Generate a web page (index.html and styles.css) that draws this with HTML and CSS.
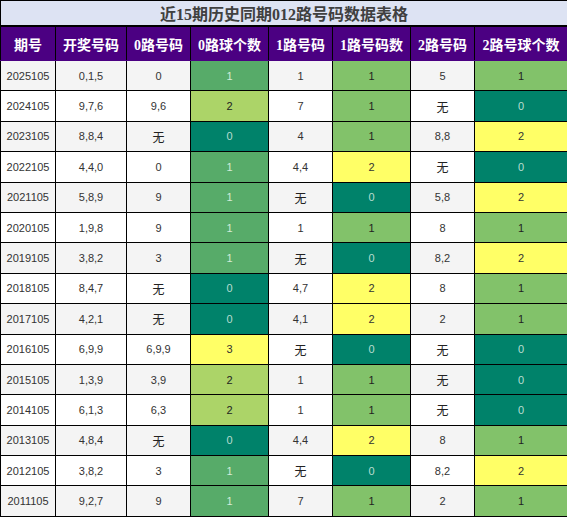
FILE: index.html
```html
<!DOCTYPE html>
<html lang="zh">
<head>
<meta charset="utf-8">
<link rel="stylesheet" href="styles.css">
</head>
<body>
<table class="grid">
  <colgroup>
    <col class="c1"><col class="c2"><col class="c3"><col class="c4"><col class="c5"><col class="c6"><col class="c7"><col class="c8">
  </colgroup>
  <thead>
    <tr class="title"><th colspan="8">近15期历史同期012路号码数据表格</th></tr>
    <tr class="head">
      <th>期号</th><th>开奖号码</th><th>0路号码</th><th>0路球个数</th><th>1路号码</th><th>1路号码数</th><th>2路号码</th><th>2路号球个数</th>
    </tr>
  </thead>
  <tbody>
    <tr><td>2025105</td><td>0,1,5</td><td>0</td><td class="mg">1</td><td>1</td><td class="g">1</td><td>5</td><td class="g">1</td></tr>
    <tr><td>2024105</td><td>9,7,6</td><td>9,6</td><td class="lg">2</td><td>7</td><td class="g">1</td><td class="cj">无</td><td class="dg">0</td></tr>
    <tr><td>2023105</td><td>8,8,4</td><td class="cj">无</td><td class="dg">0</td><td>4</td><td class="g">1</td><td>8,8</td><td class="y">2</td></tr>
    <tr><td>2022105</td><td>4,4,0</td><td>0</td><td class="mg">1</td><td>4,4</td><td class="y">2</td><td class="cj">无</td><td class="dg">0</td></tr>
    <tr><td>2021105</td><td>5,8,9</td><td>9</td><td class="mg">1</td><td class="cj">无</td><td class="dg">0</td><td>5,8</td><td class="y">2</td></tr>
    <tr><td>2020105</td><td>1,9,8</td><td>9</td><td class="mg">1</td><td>1</td><td class="g">1</td><td>8</td><td class="g">1</td></tr>
    <tr><td>2019105</td><td>3,8,2</td><td>3</td><td class="mg">1</td><td class="cj">无</td><td class="dg">0</td><td>8,2</td><td class="y">2</td></tr>
    <tr><td>2018105</td><td>8,4,7</td><td class="cj">无</td><td class="dg">0</td><td>4,7</td><td class="y">2</td><td>8</td><td class="g">1</td></tr>
    <tr><td>2017105</td><td>4,2,1</td><td class="cj">无</td><td class="dg">0</td><td>4,1</td><td class="y">2</td><td>2</td><td class="g">1</td></tr>
    <tr><td>2016105</td><td>6,9,9</td><td>6,9,9</td><td class="y">3</td><td class="cj">无</td><td class="dg">0</td><td class="cj">无</td><td class="dg">0</td></tr>
    <tr><td>2015105</td><td>1,3,9</td><td>3,9</td><td class="lg">2</td><td>1</td><td class="g">1</td><td class="cj">无</td><td class="dg">0</td></tr>
    <tr><td>2014105</td><td>6,1,3</td><td>6,3</td><td class="lg">2</td><td>1</td><td class="g">1</td><td class="cj">无</td><td class="dg">0</td></tr>
    <tr><td>2013105</td><td>4,8,4</td><td class="cj">无</td><td class="dg">0</td><td>4,4</td><td class="y">2</td><td>8</td><td class="g">1</td></tr>
    <tr><td>2012105</td><td>3,8,2</td><td>3</td><td class="mg">1</td><td class="cj">无</td><td class="dg">0</td><td>8,2</td><td class="y">2</td></tr>
    <tr><td>2011105</td><td>9,2,7</td><td>9</td><td class="mg">1</td><td>7</td><td class="g">1</td><td>2</td><td class="g">1</td></tr>
  </tbody>
</table>
</body>
</html>
```

FILE: styles.css
```css
html, body {
  margin: 0;
  padding: 0;
  background: #ffffff;
}

.grid {
  width: 567px;
  table-layout: fixed;
  border-collapse: collapse;
  border: 1px solid #000;
}

.c1 { width: 55px; }
.c2 { width: 71px; }
.c3 { width: 64px; }
.c4 { width: 78px; }
.c5 { width: 64px; }
.c6 { width: 78px; }
.c7 { width: 64px; }
.c8 { width: 93px; }

.title th {
  height: 24px;
  padding: 0;
  background: #dde3f3;
  color: #404040;
  font-family: "Liberation Serif", "Noto Sans CJK SC", serif;
  font-size: 16px;
  font-weight: bold;
  text-align: center;
  border: 1px solid #000;
  border-bottom: 2px solid #000;
}

.head th {
  height: 33px;
  padding: 0;
  background: #4b0082;
  color: #ffffff;
  font-family: "Liberation Serif", "Noto Sans CJK SC", serif;
  font-size: 14px;
  font-weight: bold;
  text-align: center;
  border: 1px solid #000;
  border-bottom: 1px solid #4b0082;
}

tbody td {
  height: 29.4px;
  padding: 0;
  text-align: center;
  font-family: "Liberation Sans", sans-serif;
  font-size: 11px;
  color: #333333;
  border: 1px solid #000;
  background: #ffffff;
}

tbody tr:nth-child(odd) td {
  background: #f4f4f4;
}

tbody td.cj {
  font-family: "Noto Sans CJK SC", sans-serif;
  font-size: 12px;
  color: #222;
}

tbody tr td.dg {
  background: #00826a;
  color: #b8ddd0;
}

tbody tr td.mg {
  background: #57ab69;
  color: #d4ecd8;
}

tbody tr td.lg {
  background: #acd468;
  color: #222;
}

tbody tr td.g {
  background: #82c26a;
  color: #222;
}

tbody tr td.y {
  background: #ffff66;
  color: #333;
}
```
